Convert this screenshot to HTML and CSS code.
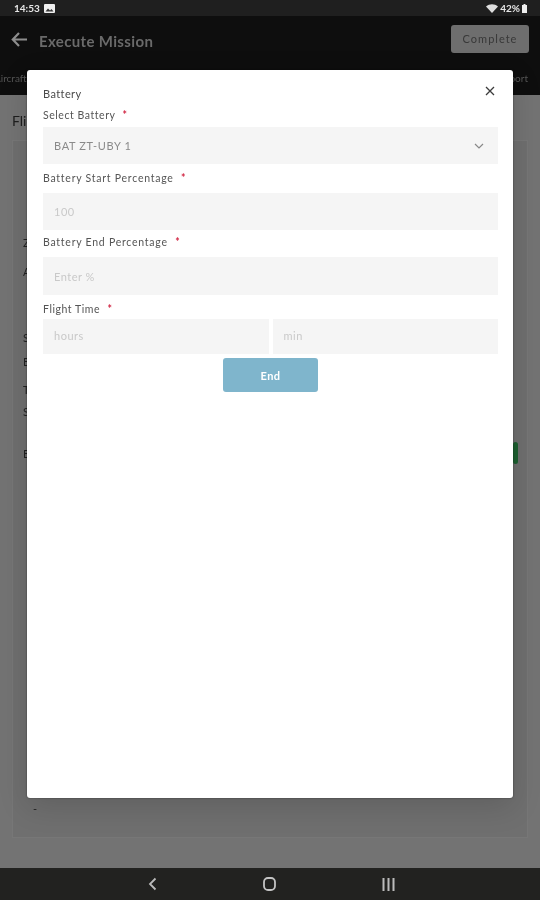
FILE: index.html
```html
<!DOCTYPE html>
<html lang="en">
<head>
    <meta charset="UTF-8">
    <title>Execute Mission</title>
    <link rel="stylesheet" href="styles.css">
</head>
<body>
    <div class="screen">
        <div class="status-bar">
            <div class="status-left">
                <span>14:53</span>
                <svg width="11" height="9" viewBox="0 0 11 9"><rect width="11" height="9" rx="1" fill="#eee"/><path d="M1.500 7.500 4 4.500l2 2 1.500-1.500 2 2.500z" fill="#333"/></svg>
            </div>
            <div class="status-right">
                <svg width="12" height="9" viewBox="0 0 12 9"><path d="M0 2.500C3.500-.6 8.500-.6 12 2.500L6 9z" fill="#ddd"/></svg>
                <span>42%</span>
                <svg width="5" height="9" viewBox="0 0 5 9"><path d="M1.500 0h2v1H5v8H0V1h1.500z" fill="#eee"/></svg>
            </div>
        </div>

        <header class="app-bar">
            <svg class="back" width="17" height="15" viewBox="0 0 17 15"><path d="M16 7.500H2M8 1 1.800 7.500 8 14" fill="none" stroke="#8d8d8d" stroke-width="2.200"/></svg>
            <h1>Execute Mission</h1>
            <button class="complete" type="button">Complete</button>
        </header>

        <nav class="tabs">
            <span>Aircraft</span>
            <span>Report</span>
        </nav>

        <!-- page behind the dialog -->
        <main class="content">
            <h2>Flight</h2>
            <div class="card">
                <div class="card-row first">Z1</div>
                <div class="card-row">Area</div>
                <div class="card-row second">Start</div>
                <div class="card-row">Bat</div>
                <div class="card-row">Time</div>
                <div class="card-row">Status</div>
                <div class="card-row end-row">
                    <span>End</span>
                    <i class="green-btn"></i>
                </div>
                <div class="dash">-</div>
            </div>
        </main>

        <footer class="nav-bar">
            <svg width="9" height="14" viewBox="0 0 9 14"><path d="M7.500 1.500 2 7l5.500 5.500" fill="none" stroke="#bbb" stroke-width="1.800"/></svg>
            <svg width="13" height="14" viewBox="0 0 13 14"><rect x="1" y="1" width="11" height="12" rx="4" fill="none" stroke="#c4c4c4" stroke-width="1.800"/></svg>
            <svg width="13" height="13" viewBox="0 0 13 13"><path d="M1.500 0v13M6.500 0v13M11.500 0v13" fill="none" stroke="#bbb" stroke-width="2"/></svg>
        </footer>

        <!-- battery dialog -->
        <section class="modal">
            <div class="modal-head">
                <span>Battery</span>
                <svg width="10" height="10" viewBox="0 0 10 10"><path d="M1 1l8 8M9 1l-8 8" fill="none" stroke="#3c3c3c" stroke-width="1.300"/></svg>
            </div>

            <label class="field-label label-select">Select Battery <b>*</b></label>
            <div class="field field-select">
                <span class="value">BAT ZT-UBY 1</span>
                <svg width="10" height="6" viewBox="0 0 10 6"><path d="M1 1l4 4 4-4" fill="none" stroke="#888" stroke-width="1.200"/></svg>
            </div>

            <label class="field-label label-start">Battery Start Percentage <b>*</b></label>
            <div class="field field-start"><span class="hint">100</span></div>

            <label class="field-label label-end">Battery End Percentage <b>*</b></label>
            <div class="field field-end"><span class="hint">Enter %</span></div>

            <label class="field-label label-time">Flight Time <b>*</b></label>
            <div class="time-row">
                <div class="field field-time"><span class="hint">hours</span></div>
                <div class="field field-time"><span class="hint">min</span></div>
            </div>

            <button class="end-btn" type="button">End</button>
        </section>
    </div>
</body>
</html>
```

FILE: styles.css
```css
* {
    box-sizing: border-box;
    margin: 0;
    padding: 0;
}

body {
    font-family: 'Lato', sans-serif;
    background: #737373;
}

.screen {
    position: relative;
    width: 540px;
    height: 900px;
    display: flex;
    flex-direction: column;
    overflow: hidden;
    filter: blur(0.35px);
}

.status-bar {
    height: 16px;
    background: #1f1f1f;
    display: flex;
    justify-content: space-between;
    align-items: center;
    padding: 0 13px 0 14px;
    color: #e6e6e6;
    font-size: 10px;
    font-weight: 700;
}

.status-left,
.status-right {
    display: flex;
    align-items: center;
    gap: 2px;
}

.status-left {
    gap: 4px;
}

.app-bar {
    height: 54px;
    background: #0e0e0e;
    display: flex;
    align-items: center;
    padding: 0 11px 4px 11px;
}

.back {
    margin-right: 11px;
    margin-top: -3px;
}

.app-bar h1 {
    flex: 1;
    font-size: 15px;
    font-weight: 700;
    color: #6a6a6a;
    letter-spacing: 0.35px;
}

.complete {
    width: 78px;
    height: 28px;
    margin-top: -5px;
    border: none;
    border-radius: 3px;
    background: #6e6e6e;
    color: #383838;
    font-family: inherit;
    font-size: 11px;
    font-weight: 400;
    letter-spacing: 1px;
}

.tabs {
    height: 25px;
    background: #0e0e0e;
    display: flex;
    justify-content: space-between;
    align-items: center;
    padding: 0 12px 9px 0;
    margin-left: -6px;
    font-size: 10px;
    color: #555;
}

.content {
    flex: 1;
    padding: 17px 12px 30px;
    display: flex;
    flex-direction: column;
    background: #737373;
}

.content h2 {
    font-size: 14px;
    font-weight: 400;
    color: #1e1e1e;
    margin-bottom: 11px;
}

.card {
    flex: 1;
    background: #6f6f6f;
    border: 1px solid #777;
    padding: 95px 10px 20px;
    font-size: 11px;
    color: #222;
}

.card-row {
    height: 24px;
}

.card-row.first {
    height: 29px;
}

.card-row.second {
    margin-top: 42px;
}

.card-row.second + .card-row {
    height: 28px;
}

.card-row.second + .card-row + .card-row {
    height: 22px;
}

.end-row {
    margin-top: 18px;
    position: relative;
}

.green-btn {
    position: absolute;
    top: -5px;
    right: -1px;
    width: 5px;
    height: 22px;
    border-radius: 3px;
    background: #1c5f30;
}

.dash {
    margin-top: 331px;
    padding-left: 10px;
}

.nav-bar {
    height: 32px;
    background: #222220;
    display: flex;
    justify-content: center;
    align-items: center;
    gap: 106px;
    padding-left: 3px;
}

.modal {
    position: absolute;
    left: 27px;
    top: 70px;
    width: 486px;
    height: 728px;
    background: #fff;
    border-radius: 3px;
    box-shadow: 0 0 2px rgba(0, 0, 0, 0.5), 0 8px 30px rgba(0, 0, 0, 0.14);
    padding: 16px 15px 0 16px;
    display: flex;
    flex-direction: column;
    color: #444;
}

.modal-head {
    display: flex;
    justify-content: space-between;
    align-items: center;
    height: 14px;
    padding-right: 3px;
    font-size: 11px;
    letter-spacing: 0.4px;
    color: #4a4a4a;
}

.modal-head svg {
    margin-top: -4px;
}

.field-label {
    display: block;
    font-size: 10.500px;
    line-height: 13px;
    letter-spacing: 0.55px;
    color: #555;
}

.field-label b {
    color: #d0213f;
    margin-left: 4px;
}

.label-select {
    margin-top: 9px;
}

.label-start {
    margin-top: 8px;
    letter-spacing: 0.75px;
}

.label-end {
    margin-top: 6px;
    letter-spacing: 0.75px;
}

.label-time {
    margin-top: 8px;
}

.field {
    background: #f5f5f5;
    display: flex;
    align-items: center;
    justify-content: space-between;
    padding: 0 14px 0 11px;
    font-size: 11px;
    letter-spacing: 0.5px;
}

.field-select {
    height: 37px;
    margin-top: 5px;
}

.field-start {
    height: 37px;
    margin-top: 8px;
}

.field-end {
    height: 38px;
    margin-top: 8px;
}

.value {
    color: #8a8a8a;
    letter-spacing: 0.65px;
}

.hint {
    color: #c9c9c9;
}

.time-row {
    display: flex;
    gap: 4px;
    margin-top: 3px;
}

.field-time {
    flex: 1;
    height: 35px;
    padding-bottom: 3px;
}

.end-btn {
    align-self: center;
    width: 95px;
    height: 34px;
    margin-top: 4px;
    border: none;
    border-radius: 3px;
    background: #7fb5cc;
    color: #fff;
    font-family: inherit;
    font-size: 11px;
    font-weight: 700;
    letter-spacing: 0.4px;
}
```
